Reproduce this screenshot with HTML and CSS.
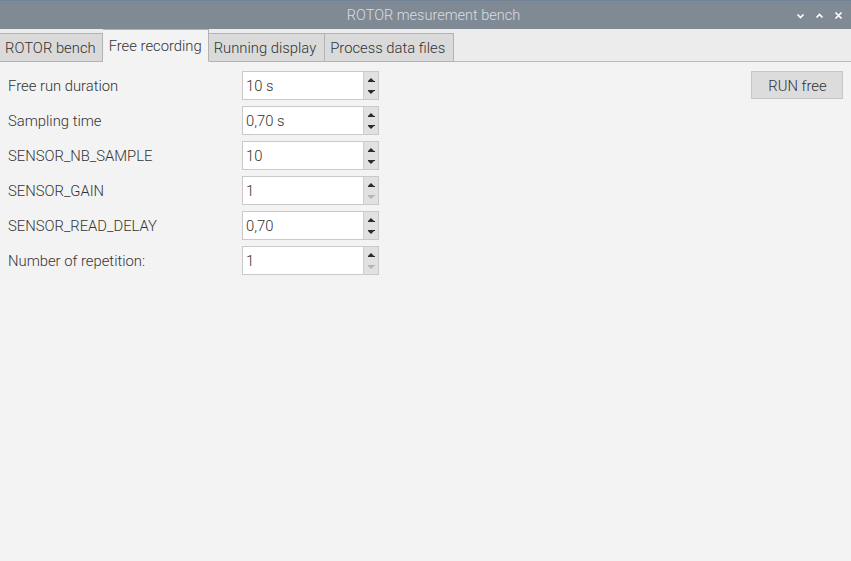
FILE: index.html
```html
<!DOCTYPE html>
<html>
<head>
<meta charset="utf-8">
<link rel="stylesheet" href="styles.css">
</head>
<body>
<div class="window">
  <div class="titlebar">
    <span class="title">ROTOR mesurement bench</span>
    <div class="controls">
      <svg width="9" height="8" viewBox="0 0 9 8"><path d="M1.5 2.5 L4.5 5.5 L7.5 2.5" fill="none" stroke="#fff" stroke-width="1.7"/></svg>
      <svg width="9" height="8" viewBox="0 0 9 8"><path d="M1.5 5.5 L4.5 2.5 L7.5 5.5" fill="none" stroke="#fff" stroke-width="1.7"/></svg>
      <svg width="9" height="9" viewBox="0 0 9 9"><path d="M1.5 1.5 L7.5 7.5 M7.5 1.5 L1.5 7.5" fill="none" stroke="#fff" stroke-width="1.7"/></svg>
    </div>
  </div>
  <div class="tabbar">
    <div class="tab first">ROTOR bench</div>
    <div class="tab active">Free recording</div>
    <div class="tab">Running display</div>
    <div class="tab">Process data files</div>
  </div>
  <div class="content">
    <div class="form">
      <div class="row">
        <span class="label">Free run duration</span>
        <div class="spin"><div class="field">10 s</div><div class="btns"><span class="up"></span><span class="down"></span></div></div>
      </div>
      <div class="row">
        <span class="label">Sampling time</span>
        <div class="spin"><div class="field">0,70 s</div><div class="btns"><span class="up"></span><span class="down"></span></div></div>
      </div>
      <div class="row">
        <span class="label">SENSOR_NB_SAMPLE</span>
        <div class="spin"><div class="field">10</div><div class="btns"><span class="up"></span><span class="down"></span></div></div>
      </div>
      <div class="row">
        <span class="label">SENSOR_GAIN</span>
        <div class="spin"><div class="field">1</div><div class="btns"><span class="up"></span><span class="down off"></span></div></div>
      </div>
      <div class="row">
        <span class="label">SENSOR_READ_DELAY</span>
        <div class="spin"><div class="field">0,70</div><div class="btns"><span class="up"></span><span class="down"></span></div></div>
      </div>
      <div class="row">
        <span class="label">Number of repetition:</span>
        <div class="spin"><div class="field">1</div><div class="btns"><span class="up"></span><span class="down off"></span></div></div>
      </div>
    </div>
    <button class="run">RUN free</button>
  </div>
</div>
</body>
</html>
```
FILE: styles.css
```css
html, body {
  margin: 0;
  padding: 0;
  background: #f3f3f3;
  font-family: Roboto, "Liberation Sans", sans-serif;
  font-size: 14.8px;
  font-weight: 300;
  color: #333;
}
.window {
  width: 851px;
  height: 561px;
  display: flex;
  flex-direction: column;
}
.titlebar {
  height: 28px;
  border-top: 1px solid #6f8296;
  background: #7f8a95;
  display: flex;
  align-items: center;
  justify-content: center;
  position: relative;
}
.title {
  color: #dadee2;
  font-size: 14.5px;
  margin-left: 16px;
}
.controls {
  position: absolute;
  right: 8px;
  top: 10px;
  display: flex;
  gap: 10px;
  align-items: center;
}
.tabbar {
  height: 32px;
  background: #ececec;
  border-bottom: 1px solid #bababa;
  display: flex;
  align-items: flex-end;
}
.tab {
  height: 27px;
  margin-bottom: -1px;
  border: 1px solid #b3b3b3;
  border-left: none;
  background: #dadada;
  padding: 0 8px 0 5px;
  display: flex;
  align-items: center;
}
.tab.first {
  padding-right: 6px;
}
.tab.active {
  background: #f3f3f3;
  border-bottom: 1px solid #f3f3f3;
  padding: 1px 6px 0 6px;
  box-sizing: border-box;
  height: 33px;
}
.content {
  flex: 1;
  display: flex;
  justify-content: space-between;
  align-items: flex-start;
  padding: 9px 8px 0 8px;
}
.form {
  display: flex;
  flex-direction: column;
  gap: 6px;
}
.row {
  display: flex;
  align-items: center;
  height: 29px;
}
.label {
  width: 234px;
  padding-top: 1px;
}
.spin {
  display: flex;
  width: 137px;
  height: 29px;
  box-sizing: border-box;
  border: 1px solid #c9c9c9;
  background: #fff;
}
.field {
  flex: 1;
  padding-left: 3px;
  padding-top: 1px;
  display: flex;
  align-items: center;
}
.btns {
  width: 15px;
  background: #e1e1e1;
  border-left: 1px solid #cfcfcf;
  display: flex;
  flex-direction: column;
  align-items: center;
  justify-content: space-between;
  padding: 6px 0 5px;
  box-sizing: border-box;
}
.up, .down {
  width: 7px;
  height: 4px;
  display: block;
  position: relative;
}
.up::before {
  content: "";
  position: absolute;
  left: 0;
  top: 0;
  border-left: 3.5px solid transparent;
  border-right: 3.5px solid transparent;
  border-bottom: 3px solid #2b2b2b;
}
.up::after, .down::after {
  content: "";
  position: absolute;
  left: 0;
  width: 7px;
  height: 1px;
  background: #2b2b2b;
}
.up::after { top: 3px; }
.down::before {
  content: "";
  position: absolute;
  left: 0;
  top: 1px;
  border-left: 3.5px solid transparent;
  border-right: 3.5px solid transparent;
  border-top: 3px solid #2b2b2b;
}
.down::after { top: 0; }
.down.off::before { border-top-color: #b5b5b5; }
.down.off::after { background: #b5b5b5; }
.run {
  width: 92px;
  height: 28px;
  background: #dcdcdc;
  border: 1px solid #c6c6c6;
  font-family: inherit;
  font-size: 14.8px;
  font-weight: 300;
  color: #333;
  padding: 2px 0 0 1px;
}
```
